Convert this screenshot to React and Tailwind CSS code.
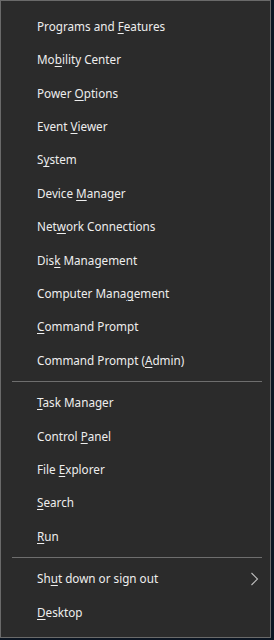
const groups = [
  [
    ["Programs and ", "F", "eatures"],
    ["Mo", "b", "ility Center"],
    ["Power ", "O", "ptions"],
    ["Event ", "V", "iewer"],
    ["S", "y", "stem"],
    ["Device ", "M", "anager"],
    ["Net", "w", "ork Connections"],
    ["Dis", "k", " Management"],
    ["Computer Mana", "g", "ement"],
    ["", "C", "ommand Prompt"],
    ["Command Prompt (", "A", "dmin)"],
  ],
  [
    ["", "T", "ask Manager"],
    ["Control ", "P", "anel"],
    ["File ", "E", "xplorer"],
    ["", "S", "earch"],
    ["", "R", "un"],
  ],
  [
    ["Sh", "u", "t down or sign out", true],
    ["", "D", "esktop"],
  ],
];

const Item = ({ label }) => {
  const [pre, key, post, sub] = label;
  return (
    <div className="h-[33.4px] flex items-center pl-[36px] pr-[10px] justify-between">
      <span className="whitespace-nowrap">
        {pre}
        <span className="underline underline-offset-[2px] decoration-1">{key}</span>
        {post}
      </span>
      {sub && (
        <svg width="10" height="14" viewBox="0 0 10 14" className="text-[#bdbdbd]">
          <path d="M1.5 1 L7.5 7 L1.5 13" fill="none" stroke="currentColor" strokeWidth="1.1" />
        </svg>
      )}
    </div>
  );
};

const App = () => {
  return (
    <div className="w-[274px] h-[640px] bg-[#0b1522] overflow-hidden">
      <div
        className="w-[271px] h-[638px] bg-[#2b2b2b] border border-[#6a6a6a] text-[#eeeeee] text-[11.7px] pt-[9px]"
        style={{ fontFamily: '"Noto Sans", "Open Sans", sans-serif' }}
      >
        {groups.map((g, gi) => (
          <div key={gi}>
            {gi > 0 && (
              <div className="py-[4px] pl-[11px] pr-[8px]">
                <div className="h-px bg-[#6e6e6e]" />
              </div>
            )}
            {g.map((it, i) => (
              <Item key={i} label={it} />
            ))}
          </div>
        ))}
      </div>
    </div>
  );
};

export default App;
